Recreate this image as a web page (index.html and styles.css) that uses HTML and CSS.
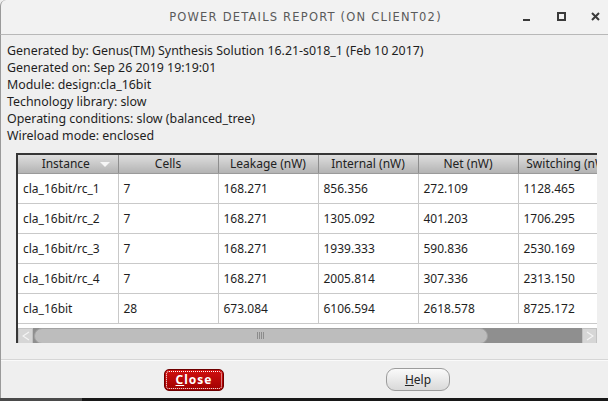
FILE: index.html
```html
<!DOCTYPE html>
<html>
<head>
<meta charset="utf-8">
<link rel="stylesheet" href="styles.css">
</head>
<body>
<div class="window">
  <div class="titlebar">
    <div class="title">Power Details Report (on client02)</div>
    <div class="controls">
      <span class="ctl min"></span>
      <span class="ctl max"></span>
      <span class="ctl close">
        <svg width="9" height="9" viewBox="0 0 9 9"><path d="M1 1 L8 8 M8 1 L1 8" stroke="#3a3a3a" stroke-width="2"/></svg>
      </span>
    </div>
  </div>
  <div class="content">
    <div class="info">
      <div>Generated by: Genus(TM) Synthesis Solution 16.21-s018_1 (Feb 10 2017)</div>
      <div>Generated on: Sep 26 2019 19:19:01</div>
      <div>Module: design:cla_16bit</div>
      <div>Technology library: slow</div>
      <div>Operating conditions: slow (balanced_tree)</div>
      <div>Wireload mode: enclosed</div>
    </div>
    <div class="frame">
      <div class="clip">
        <table class="grid">
          <thead>
            <tr>
              <th><span>Instance</span><span class="sort"></span></th>
              <th>Cells</th>
              <th>Leakage (nW)</th>
              <th>Internal (nW)</th>
              <th>Net (nW)</th>
              <th>Switching (nW)</th>
            </tr>
          </thead>
          <tbody>
            <tr><td>cla_16bit/rc_1</td><td>7</td><td>168.271</td><td>856.356</td><td>272.109</td><td>1128.465</td></tr>
            <tr><td>cla_16bit/rc_2</td><td>7</td><td>168.271</td><td>1305.092</td><td>401.203</td><td>1706.295</td></tr>
            <tr><td>cla_16bit/rc_3</td><td>7</td><td>168.271</td><td>1939.333</td><td>590.836</td><td>2530.169</td></tr>
            <tr><td>cla_16bit/rc_4</td><td>7</td><td>168.271</td><td>2005.814</td><td>307.336</td><td>2313.150</td></tr>
            <tr><td>cla_16bit</td><td>28</td><td>673.084</td><td>6106.594</td><td>2618.578</td><td>8725.172</td></tr>
          </tbody>
        </table>
        <div class="gap"></div>
        <div class="hscroll">
          <div class="sbtn left"><svg width="8" height="10" viewBox="0 0 8 10"><path d="M7 1 L1 5 L7 9" fill="none" stroke="#f4f4f4" stroke-width="1.2"/></svg></div>
          <div class="thumb"><span class="grip"></span></div>
          <div class="track"></div>
          <div class="sbtn right"><svg width="8" height="10" viewBox="0 0 8 10"><path d="M1 1 L7 5 L1 9" fill="none" stroke="#f4f4f4" stroke-width="1.2"/></svg></div>
        </div>
      </div>
    </div>
    <div class="footer">
      <button class="btn primary"><span class="u">C</span>lose</button>
      <button class="btn"><span class="u">H</span>elp</button>
    </div>
  </div>
  <div class="desk"></div>
</div>
</body>
</html>
```
FILE: styles.css
```css
html, body {
  margin: 0;
  padding: 0;
  width: 608px;
  height: 401px;
  overflow: hidden;
  background: #1c1c1c;
}
.window {
  width: 608px;
  height: 401px;
  display: flex;
  flex-direction: column;
  background: #efefef;
  font-family: "Noto Sans", "Open Sans", sans-serif;
  font-size: 12px;
  color: #1e1e1e;
}
.titlebar {
  height: 34px;
  flex: none;
  display: flex;
  align-items: center;
  position: relative;
  background: #f2f2f2;
  border-bottom: 1px solid #b8b8b8;
  border-left: 1px solid #9a9a9a;
  border-top-left-radius: 6px;
}
.title {
  flex: 1;
  text-align: center;
  text-transform: uppercase;
  font-family: "DejaVu Sans", sans-serif;
  font-size: 11.5px;
  letter-spacing: 1.2px;
  color: #5a5a5a;
  padding-left: 2px;
}
.controls {
  position: absolute;
  right: 8px;
  top: 12px;
  display: flex;
  align-items: center;
  gap: 25px;
}
.ctl {
  display: block;
  width: 9px;
  height: 9px;
  box-sizing: border-box;
}
.ctl.min {
  border-bottom: 2px solid #3a3a3a;
  width: 7px;
  margin-right: 2px;
}
.ctl.max {
  border: 2px solid #3a3a3a;
  width: 9px;
  height: 9px;
}
.ctl.close svg { display: block; }
.content {
  flex: 1;
  display: flex;
  flex-direction: column;
  border-left: 1px solid #9a9a9a;
}
.info {
  padding: 7px 0 0 6px;
  line-height: 17px;
  font-size: 12.4px;
  color: #1e1e1e;
  height: 102px;
}
.frame {
  margin: 9px 0 0 15px;
  width: 581px;
  height: 190px;
  box-sizing: border-box;
  border-top: 2px solid #363636;
  border-left: 2px solid #363636;
  background: #ffffff;
}
.clip {
  width: 579px;
  height: 188px;
  overflow: hidden;
  display: flex;
  flex-direction: column;
}
.grid {
  border-collapse: collapse;
  table-layout: fixed;
  width: 600px;
  flex: none;
}
.grid th {
  width: 100px;
  height: 18px;
  padding: 0;
  box-sizing: border-box;
  font-weight: normal;
  font-size: 12px;
  color: #222;
  text-align: center;
  background: linear-gradient(#dedede, #b3b3b3);
  border-right: 1px solid #8e8e8e;
  border-bottom: 1px solid #9a9a9a;
  position: relative;
  white-space: nowrap;
}
.grid th:first-child span:first-child { margin-left: -4px; }
.sort {
  position: absolute;
  right: 8px;
  top: 7px;
  width: 0;
  height: 0;
  border-left: 5px solid transparent;
  border-right: 5px solid transparent;
  border-top: 5px solid #f6f6f6;
}
.grid td {
  height: 30px;
  padding: 0 0 0 5px;
  box-sizing: border-box;
  border-right: 1px solid #c9c9c9;
  border-bottom: 1px solid #c9c9c9;
  font-size: 12px;
  color: #1e1e1e;
  white-space: nowrap;
}
.gap {
  height: 4px;
  flex: none;
}
.hscroll {
  height: 16px;
  flex: none;
  display: flex;
  width: 579px;
  background: #8f8f8f;
}
.sbtn {
  width: 15px;
  height: 16px;
  box-sizing: border-box;
  background: #d6d6d6;
  border: 1px solid #c2c2c2;
  display: flex;
  align-items: center;
  justify-content: center;
  flex: none;
}
.thumb {
  width: 454px;
  height: 16px;
  box-sizing: border-box;
  flex: none;
  margin-left: 1px;
  background: #bdbdbd;
  border: 1px solid #a3a3a3;
  border-radius: 8px;
  display: flex;
  align-items: center;
  justify-content: center;
}
.grip {
  width: 8px;
  height: 7px;
  background: repeating-linear-gradient(90deg, #8c8c8c 0 1px, transparent 1px 2px);
}
.track { flex: 1; }
.footer {
  margin-top: 16px;
  border-top: 1px solid #d6d6d6;
  box-shadow: inset 0 1px 0 #fafafa;
  flex: 1;
  display: flex;
  align-items: center;
  padding-left: 163px;
  gap: 162px;
  padding-top: 1px;
}
.btn {
  font-family: "Noto Sans", "Open Sans", sans-serif;
  font-size: 12px;
  height: 23px;
  width: 64px;
  padding: 0;
  border: 1px solid #9c9c9c;
  border-radius: 9px;
  background: linear-gradient(#fafafa, #d9d9d9);
  color: #222;
}
.btn.primary {
  width: 60px;
  height: 22px;
  border-radius: 5px;
  border: 1px solid #6e0000;
  background: linear-gradient(#d01010, #a00000);
  color: #fff;
  font-weight: bold;
  letter-spacing: 1px;
  outline: 1px dotted #ffffff;
  outline-offset: -3px;
}
.u { text-decoration: underline; }
.desk {
  height: 3px;
  flex: none;
  background: linear-gradient(90deg, #4a4a4a 0 82px, #181818 82px);
}
```
